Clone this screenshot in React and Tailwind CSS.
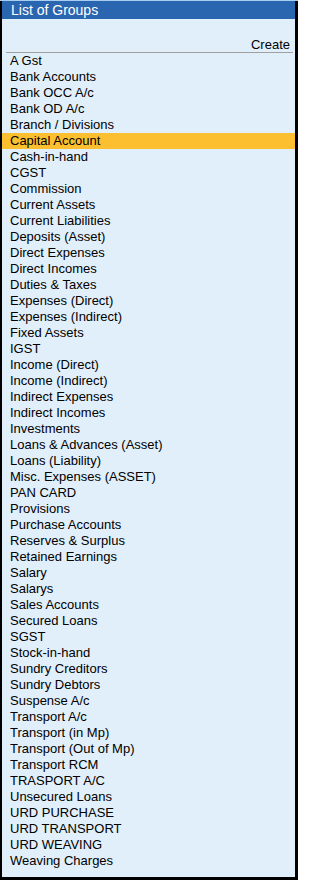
const groups = [
  "A Gst",
  "Bank Accounts",
  "Bank OCC A/c",
  "Bank OD A/c",
  "Branch / Divisions",
  "Capital Account",
  "Cash-in-hand",
  "CGST",
  "Commission",
  "Current Assets",
  "Current Liabilities",
  "Deposits (Asset)",
  "Direct Expenses",
  "Direct Incomes",
  "Duties & Taxes",
  "Expenses (Direct)",
  "Expenses (Indirect)",
  "Fixed Assets",
  "IGST",
  "Income (Direct)",
  "Income (Indirect)",
  "Indirect Expenses",
  "Indirect Incomes",
  "Investments",
  "Loans & Advances (Asset)",
  "Loans (Liability)",
  "Misc. Expenses (ASSET)",
  "PAN CARD",
  "Provisions",
  "Purchase Accounts",
  "Reserves & Surplus",
  "Retained Earnings",
  "Salary",
  "Salarys",
  "Sales Accounts",
  "Secured Loans",
  "SGST",
  "Stock-in-hand",
  "Sundry Creditors",
  "Sundry Debtors",
  "Suspense A/c",
  "Transport A/c",
  "Transport (in Mp)",
  "Transport (Out of Mp)",
  "Transport RCM",
  "TRASPORT A/C",
  "Unsecured Loans",
  "URD PURCHASE",
  "URD TRANSPORT",
  "URD WEAVING",
  "Weaving Charges",
];

export default function App() {
  const selected = "Capital Account";

  return (
    <div className="flex h-[880px] w-[298px] flex-col border-t border-[#a9cdf0] bg-black font-['Liberation_Sans',Arial,sans-serif] text-[13px] text-black">
      {/* Window frame */}
      <div className="mb-[3px] ml-[2px] mr-[3px] flex flex-1 flex-col bg-[#e1effb]">
        {/* Title bar */}
        <div className="h-[18px] bg-[#2a66b0] pl-[9px] text-[14px] leading-[18px] text-white">
          List of Groups
        </div>

        {/* Column header */}
        <div className="h-[33px] pr-[5px] pt-[18px] text-right leading-[15px]">Create</div>
        <div className="ml-[4px] mr-[2px] h-px bg-[#a0a0a0]" />

        {/* Group list */}
        <ul className="flex flex-col">
          {groups.map((g) => (
            <li
              key={g}
              className={
                g === selected
                  ? "h-[16px] bg-[#fcbf30] pl-[8px] leading-[16px] whitespace-nowrap"
                  : "h-[16px] pl-[8px] leading-[16px] whitespace-nowrap"
              }
            >
              {g}
            </li>
          ))}
        </ul>
      </div>
    </div>
  );
}
